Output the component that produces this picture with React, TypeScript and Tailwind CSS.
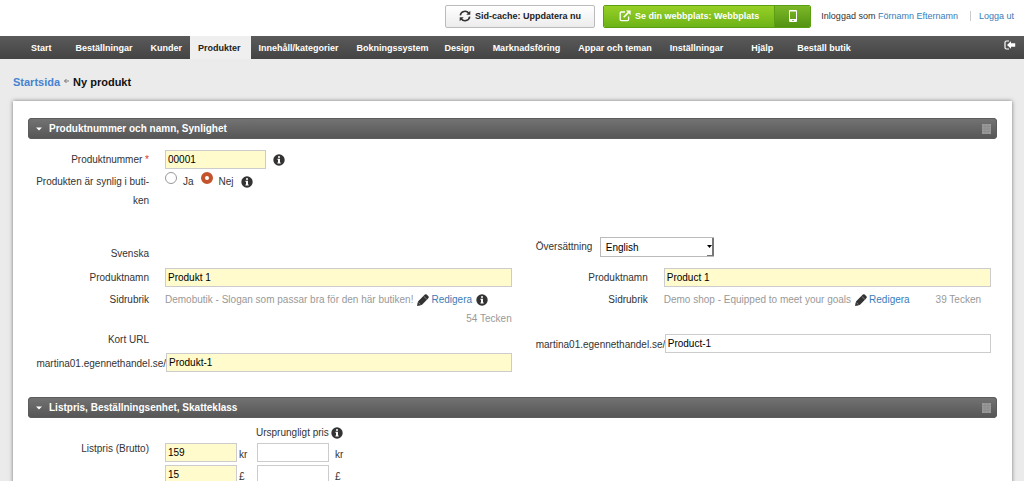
import type { ReactNode } from "react";
import clsx from "clsx";

const navItems = [
  { label: "Start", className: "pl-2 pr-4" },
  { label: "Beställningar", className: "pl-2 pr-2.5" },
  { label: "Kunder", className: "px-2" },
  { label: "Produkter", className: "pl-2 pr-2.5", active: true },
  { label: "Innehåll/kategorier", className: "px-2" },
  { label: "Bokningssystem", className: "pl-2.5 pr-2" },
  { label: "Design", className: "pl-2 pr-2.5" },
  { label: "Marknadsföring", className: "px-2" },
  { label: "Appar och teman", className: "pl-2.5 pr-2" },
  { label: "Inställningar", className: "pl-2.5 pr-3" },
  { label: "Hjälp", className: "px-4" },
  { label: "Beställ butik", className: "px-2" },
];

const prices = [
  { id: "sek", value: "159", unit: "kr" },
  { id: "gbp", value: "15", unit: "£" },
];

function InfoIcon() {
  return (
    <svg viewBox="0 0 12 12" className="size-3 shrink-0">
      <circle cx="6" cy="6" r="5.7" fill="#333" />
      <path d="M5 2.2h2v1.6H5zM4.4 4.8H7v3.7h.7v1H4.4v-1H5V5.8h-.6z" fill="#fff" />
    </svg>
  );
}

function PencilIcon() {
  return (
    <svg viewBox="0 0 12 12" className="size-3 shrink-0 fill-[#333]">
      <path d="M7.1 1.300L7.900.6Q8.800-.2 9.700.6L11.400 2.300Q12.200 3.200 11.400 4.100L10.700 4.900 5 10.800Q3.500 11.700.1 12 .3 8.600 1.200 7.200z" />
      <path d="M1.500 8.700l1.900 1.800M6.700 2.300l3.200 3.100" stroke="#fff" strokeWidth=".4" />
    </svg>
  );
}

function RefreshIcon() {
  return (
    <svg viewBox="0 0 12 12" className="size-3 shrink-0" fill="none" stroke="#333" strokeWidth="1.6">
      <path d="M1.300 5.300A4.700 4.700 0 0 1 9.800 3.300M10.700 6.700A4.700 4.700 0 0 1 2.200 8.700" />
      <path d="M11.300.8v4H7.300zM.7 11.200v-4h4z" fill="#333" stroke="none" />
    </svg>
  );
}

function OpenIcon() {
  return (
    <svg viewBox="0 0 12 12" className="size-3 shrink-0" fill="none" stroke="#fff" strokeWidth="1.3">
      <path d="M6 2H2.200Q1.200 2 1.200 3v6.600q0 1 1 1h6.400q1 0 1-1V6.500" />
      <path d="M4.700 7.200L9.500 2.400" strokeWidth="1.600" />
      <path d="M7 .4h4.600V5z" fill="#fff" stroke="none" />
    </svg>
  );
}

function SectionBar({ title }: { title: string }) {
  return (
    <div className="flex h-[21px] items-center rounded bg-linear-to-b from-[#747474] to-[#555] pr-1.5 pl-2 text-white shadow-[inset_0_0_0_1px_#5c5c5c]">
      <svg viewBox="0 0 6 4" className="mr-[7px] h-1 w-1.5 fill-white">
        <path d="M0 .5h6L3 3.500z" />
      </svg>
      <h2 className="flex-1 font-bold">{title}</h2>
      <svg viewBox="0 0 9 10" className="h-2.5 w-[9px]">
        <path d="M0 0h9v10H0z" fill="#999" />
        <path d="M0 2.500h9M0 5h9M0 7.500h9M3 0v10M6 0v10" stroke="#858585" strokeWidth=".5" />
      </svg>
    </div>
  );
}

function TextField({ id, value, label, className }: { id: string; value?: string; label?: string; className: string }) {
  return (
    <input
      id={id}
      type="text"
      aria-label={label}
      defaultValue={value}
      className={clsx("h-[19px] min-w-0 border border-[#ccc] px-0.5 text-black outline-none", className)}
    />
  );
}

function Label({ htmlFor, className, children }: { htmlFor: string; className: string; children: ReactNode }) {
  return (
    <label htmlFor={htmlFor} className={clsx("shrink-0 text-right", className)}>
      {children}
    </label>
  );
}

function EditLink() {
  return (
    <a href="#redigera" className="ml-1 flex items-center gap-0.5 text-[#3a7cb8]">
      <PencilIcon />
      Redigera
    </a>
  );
}

function Radio({ label, checked }: { label: string; checked?: boolean }) {
  return (
    <label className="mr-[7px] flex items-start gap-1.5">
      <input
        type="radio"
        name="visible"
        defaultChecked={checked}
        className="size-3 appearance-none rounded-full border border-[#999] bg-white checked:border-4 checked:border-[#c4532c]"
      />
      <span>{label}</span>
    </label>
  );
}

export default function App() {
  return (
    <div className="flex h-screen flex-col overflow-hidden bg-[#ebebeb] font-['Liberation_Sans',Arial,sans-serif] text-[10px] leading-[19px] text-[#333]">
      <header className="flex h-9 shrink-0 items-center justify-end bg-white pr-2.5 pb-1 text-[9px]">
        <button className="mr-2 flex h-[23px] items-center gap-1 rounded-xs border border-[#bbb] bg-linear-to-b from-white to-[#ececec] px-[13px] font-bold text-[#222]">
          <RefreshIcon />
          Sid-cache: Uppdatera nu
        </button>
        <div className="mr-2.5 flex h-[23px] overflow-hidden rounded-xs border border-[#5a9e12] text-white">
          <button className="flex items-center gap-1 bg-linear-to-b from-[#97d026] to-[#6cb317] px-[15px] font-bold">
            <OpenIcon />
            Se din webbplats: Webbplats
          </button>
          <button aria-label="Mobil" className="flex w-9 items-center justify-center border-l border-[#5a9e12] bg-linear-to-b from-[#7cb828] to-[#539310]">
            <svg viewBox="0 0 8 12" className="h-3 w-2">
              <path d="M1 0h6q1 0 1 1v10q0 1-1 1H1q-1 0-1-1V1q0-1 1-1zM1 1.500v7.500h6V1.500zM3.300 10v1h1.400v-1z" fill="#fff" fillRule="evenodd" />
            </svg>
          </button>
        </div>
        <p>
          Inloggad som <a href="#konto" className="text-[#3a7cb8]">Förnamn Efternamn</a>
        </p>
        <span className="mr-2 ml-3 h-2.5 border-l border-[#ccc]" />
        <a href="#logga-ut" className="text-[#3a7cb8]">Logga ut</a>
      </header>

      <nav className="flex h-[23px] shrink-0 items-stretch bg-linear-to-b from-[#5a5a5a] to-[#444] pr-2 pl-[23px] text-[9px] font-bold leading-6 text-white">
        {navItems.map((item) => (
          <a
            key={item.label}
            href="#"
            className={clsx("whitespace-nowrap", item.className, item.active && "bg-[#efefef] text-[#222]")}
          >
            {item.label}
          </a>
        ))}
        <a href="#ut" aria-label="Stäng" className="ml-auto pt-1">
          <svg viewBox="0 0 12 10" className="h-2.5 w-3">
            <path d="M5 1H2.500Q1 1 1 2.500v5Q1 9 2.500 9H5" fill="none" stroke="#fff" strokeWidth="1.200" />
            <path d="M3 5L7 1.200V3.300h4.200v3.400H7v2.100z" fill="#fff" />
          </svg>
        </a>
      </nav>

      <div className="flex h-[42px] shrink-0 items-center gap-1 px-[13px] pt-1 text-[11px] font-bold text-[#111]">
        <a href="#startsida" className="text-[#4583d0]">Startsida</a>
        <svg viewBox="0 0 5 4" className="mb-0.5 h-1 w-[5px]">
          <path d="M2.500 0L.5 2l2 2M.5 2H5" fill="none" stroke="#777" />
        </svg>
        <h1>Ny produkt</h1>
      </div>

      <main className="mr-3 ml-[13px] flex-1 bg-white px-[15px] pt-[17px] shadow-[0_0_4px_#777]">
        <SectionBar title="Produktnummer och namn, Synlighet" />

        <div className="mt-[11px] flex items-center">
          <Label htmlFor="number" className="mr-4 w-[121px]">
            Produktnummer <span className="text-[#d33]">*</span>
          </Label>
          <TextField id="number" value="00001" className="mr-[7px] w-[101px] bg-[#fffbcc]" />
          <InfoIcon />
        </div>
        <fieldset className="mt-[3px] flex items-start">
          <legend className="float-left mr-4 w-[121px] text-right">
            Produkten är synlig i buti-
            <br />
            ken
          </legend>
          <Radio label="Ja" />
          <Radio label="Nej" checked />
          <span className="flex h-[19px] items-center"><InfoIcon /></span>
        </fieldset>

        <div className="mt-[27px] mr-1.5 grid grid-cols-[17fr_16fr] gap-6">
          <section>
            <h3 className="w-[121px] pt-[7px] text-right">Svenska</h3>
            <div className="mt-[5px] flex">
              <Label htmlFor="name-sv" className="mr-4 w-[121px]">Produktnamn</Label>
              <TextField id="name-sv" value="Produkt 1" className="flex-1 bg-[#fffbcc]" />
            </div>
            <div className="mt-[3px] flex items-center text-[#999]">
              <span className="mr-4 w-[121px] text-right text-[#333]">Sidrubrik</span>
              <span>Demobutik - Slogan som passar bra för den här butiken!</span>
              <EditLink />
              <span className="ml-1"><InfoIcon /></span>
            </div>
            <p className="text-right text-[#999]">54 Tecken</p>
            <h3 className="mt-0.5 w-[121px] text-right">Kort URL</h3>
            <div className="mt-1 flex justify-end">
              <Label htmlFor="url-sv" className="w-[138px] pt-px">martina01.egennethandel.se/</Label>
              <TextField id="url-sv" value="Produkt-1" className="flex-1 bg-[#fffbcc]" />
            </div>
          </section>

          <section>
            <div className="flex">
              <Label htmlFor="language" className="mr-2 w-14">Översättning</Label>
              <div className="relative w-[114px]">
                <select id="language" defaultValue="English" className="h-5 w-full appearance-none border border-[#bbb] bg-white px-[5px] text-black">
                  <option>English</option>
                </select>
                <span className="pointer-events-none absolute top-px right-0 flex h-[18px] w-[7px] items-center justify-center border-r-2 border-b border-[#777]">
                  <svg viewBox="0 0 5 3" className="h-[3px] w-[5px]">
                    <path d="M0 0h5L2.500 3z" />
                  </svg>
                </span>
              </div>
            </div>
            <div className="mt-[11px] flex">
              <Label htmlFor="name-en" className="mr-4 w-28">Produktnamn</Label>
              <TextField id="name-en" value="Product 1" className="flex-1 bg-[#fffbcc]" />
            </div>
            <div className="mt-[3px] flex items-center text-[#999]">
              <span className="mr-4 w-28 text-right text-[#333]">Sidrubrik</span>
              <span>Demo shop - Equipped to meet your goals</span>
              <EditLink />
              <span className="mr-2.5 ml-auto">39 Tecken</span>
            </div>
            <div className="mt-[25px] flex">
              <Label htmlFor="url-en" className="w-[129px] pt-px">martina01.egennethandel.se/</Label>
              <TextField id="url-en" value="Product-1" className="flex-1 bg-white" />
            </div>
          </section>
        </div>

        <div className="mt-6">
          <SectionBar title="Listpris, Beställningsenhet, Skatteklass" />
        </div>
        <div className="mt-[5px] ml-[228px] flex items-center gap-0.5">
          Ursprungligt pris
          <InfoIcon />
        </div>
        <div className="mt-px flex">
          <Label htmlFor="price-sek" className="mr-4 w-[121px] leading-3">Listpris (Brutto)</Label>
          <div className="space-y-[3px]">
            {prices.map((price) => (
              <div key={price.id} className="flex h-[19px]">
                <TextField id={`price-${price.id}`} value={price.value} label={`Listpris ${price.unit}`} className="w-[72px] bg-[#fffbcc]" />
                <span className="w-5 pt-0.5 pl-0.5">{price.unit}</span>
                <TextField id={`old-${price.id}`} label={`Ursprungligt pris ${price.unit}`} className="w-[72px] bg-white" />
                <span className="pt-0.5 pl-1.5">{price.unit}</span>
              </div>
            ))}
          </div>
        </div>
      </main>
    </div>
  );
}
